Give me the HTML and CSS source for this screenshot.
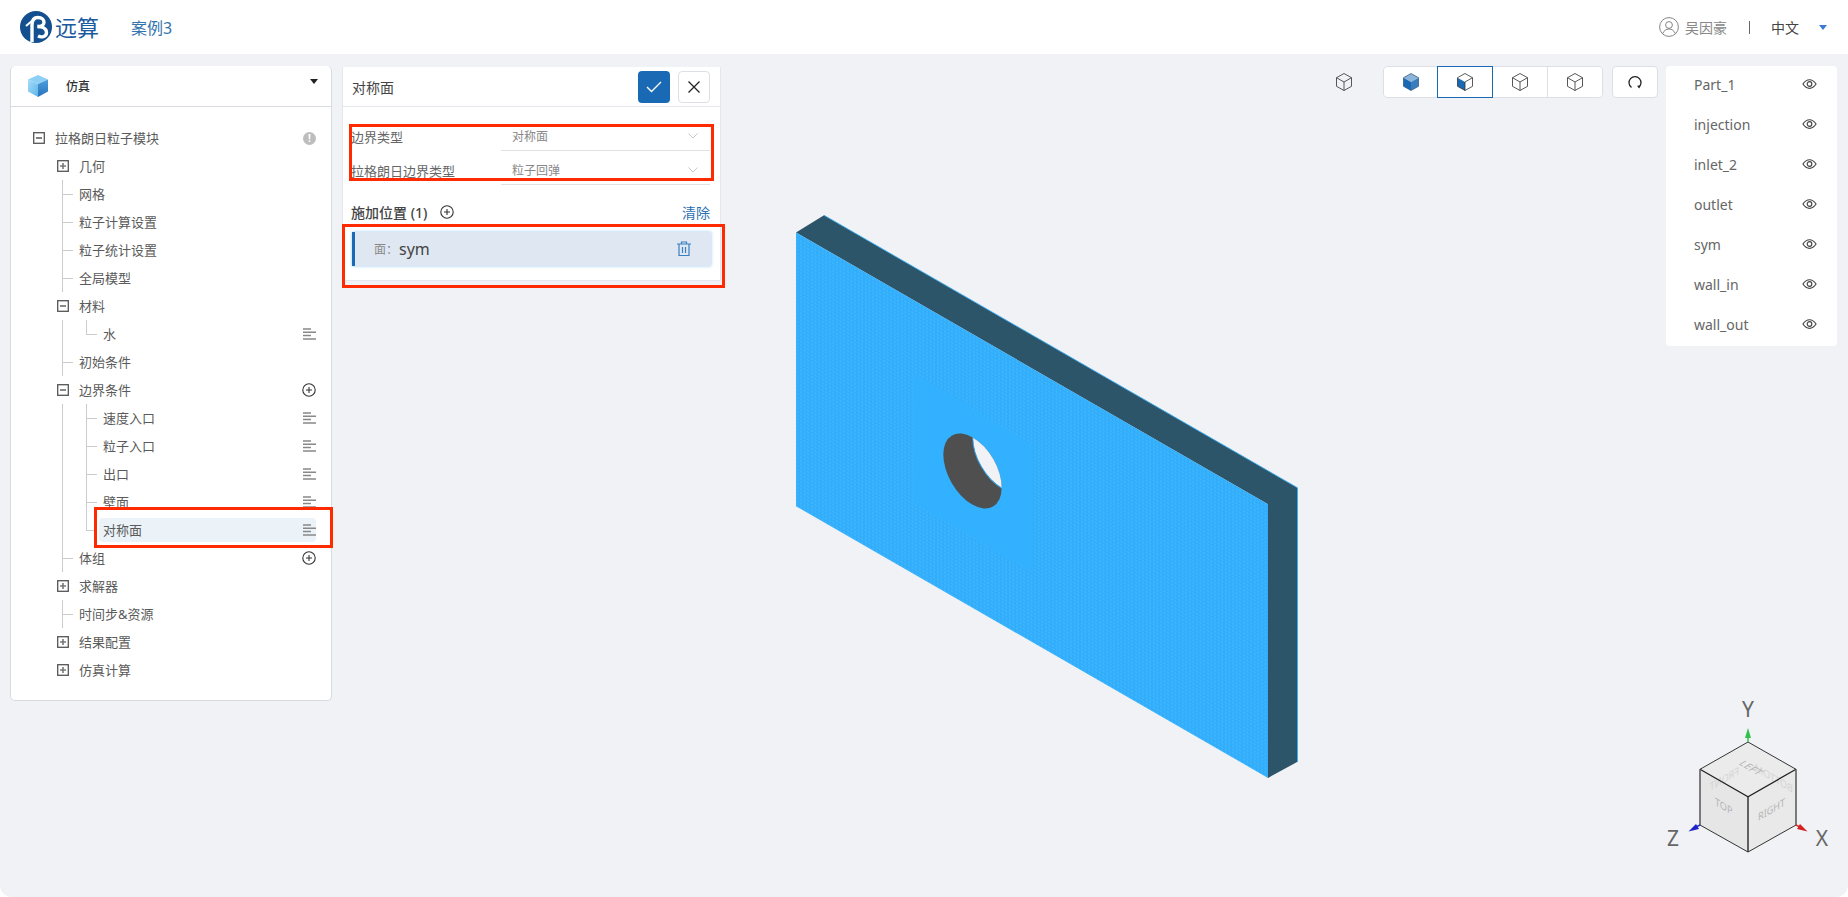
FILE: index.html
```html
<!DOCTYPE html>
<html lang="zh-CN">
<head>
    <meta charset="UTF-8">
    <meta name="viewport" content="width=device-width, initial-scale=1.0">
    <title>远算 - 案例3</title>
    <link rel="stylesheet" href="styles.css">
</head>
<body>
<svg class="sprites" width="0" height="0">
    <symbol id="i-minus" viewBox="0 0 12 12"><rect x=".7" y=".7" width="10.6" height="10.6" fill="#fff" stroke="#555" stroke-width="1.3"/><path d="M3 6h6" stroke="#555" stroke-width="1.4"/></symbol>
    <symbol id="i-plus" viewBox="0 0 12 12"><rect x=".7" y=".7" width="10.6" height="10.6" fill="#fff" stroke="#555" stroke-width="1.3"/><path d="M3 6h6M6 3v6" stroke="#777" stroke-width="1.6"/></symbol>
    <symbol id="i-lines" viewBox="0 0 13 12"><path d="M0 1h8M0 4.300h13M0 7.600h8M0 10.900h13" stroke="#888" stroke-width="1.500"/></symbol>
    <symbol id="i-add" viewBox="0 0 14 14"><circle cx="7" cy="7" r="6.200" fill="none" stroke="#333" stroke-width="1.100"/><path d="M4 7h6M7 4v6" stroke="#333" stroke-width="1.100"/></symbol>
    <symbol id="i-eye" viewBox="0 0 16 12"><path d="M1 6c2-3 4.300-4.600 7-4.600S13 3 15 6c-2 3-4.300 4.600-7 4.600S3 9 1 6z" fill="none" stroke="#444" stroke-width="1.200"/><circle cx="8" cy="6" r="2.500" fill="none" stroke="#444" stroke-width="1.200"/></symbol>
    <symbol id="i-chev" viewBox="0 0 10 6"><path d="M.5.500 5 5 9.500.500" fill="none" stroke="#c4c7cc" stroke-width="1"/></symbol>
    <symbol id="cube-plain" viewBox="0 0 16 18">
        <path d="M8 .5 15.500 4.700V13.300L8 17.500.5 13.300V4.700zM.5 4.700 8 9 15.500 4.700M8 9V17.500" fill="none" stroke="#444" stroke-width=".9"/>
    </symbol>
</svg>

<div class="app">
    <!-- 3D model and axis widget -->
    <svg class="model" viewBox="0 0 1848 897">
        <defs>
            <pattern id="mesh" width="3.600" height="3.600" patternUnits="userSpaceOnUse" patternTransform="skewY(30)">
                <rect width="3.600" height="3.600" fill="#32acfa"/>
                <rect x=".7" y=".7" width="2.200" height="2.200" fill="#3ab6ff"/>
            </pattern>
            <pattern id="mesh-fine" width="2.400" height="2.400" patternUnits="userSpaceOnUse" patternTransform="skewY(30)">
                <rect width="2.400" height="2.400" fill="#31b0ff"/>
                <rect x=".5" y=".5" width="1.400" height="1.400" fill="#34b3ff"/>
            </pattern>
            <clipPath id="hole-clip">
                <ellipse cx="972.500" cy="471" rx="41" ry="24" transform="rotate(60 972.500 471)"/>
            </clipPath>
        </defs>
        <path d="M796 232.500 824 215.300 1297.500 487.800V761.800L1268 777.900V504.200z" fill="#2d5569"/>
        <path d="M824 215.300 1297.500 487.800V761.800" fill="none" stroke="#38aef5" stroke-width=".9"/>
        <path d="M796 232.500 1268 504.200V777.900L796 506.200z" fill="url(#mesh)"/>
        <path d="M913 372.200 1032.500 444.900V573.100L913 502.300z" fill="url(#mesh-fine)"/>
        <ellipse cx="972.500" cy="471" rx="41" ry="24" transform="rotate(60 972.500 471)" fill="#4f4f4f"/>
        <g clip-path="url(#hole-clip)">
            <ellipse cx="1002" cy="454.600" rx="41" ry="24" transform="rotate(60 1002 454.600)" fill="#f0f2f6" stroke="#2f9fe0" stroke-width="1"/>
        </g>
    </svg>

    <svg class="axes" viewBox="0 0 218 217">
        <path d="M118 62 166 89.300 118 116.700 70 89.300z" fill="#ebebeb"/>
        <path d="M70 89.300 118 116.700V172L70 145z" fill="#e6e6e6"/>
        <path d="M118 116.700 166 89.300V145L118 172z" fill="#e9e9e9"/>
        <g class="axes-faint">
            <text transform="matrix(-.866 -.5 0 1 163 113)">BOTTOM</text>
            <text transform="matrix(-.866 .5 0 1 109 94)">FRONT</text>
        </g>
        <g class="axes-face">
            <text transform="matrix(.866 .5 0 1 85 125)">TOP</text>
            <text transform="matrix(.866 -.5 0 1 128 141)">RIGHT</text>
            <text transform="matrix(.866 .5 -.866 .5 108 84)">LEFT</text>
        </g>
        <path d="M118 62 166 89.300V145L118 172 70 145V89.300z" fill="none" stroke="#333" stroke-width="1"/>
        <path d="M70 89.300 118 116.700 166 89.300" fill="none" stroke="#222" stroke-width="1.300"/>
        <path d="M118 116.700V172" stroke="#333" stroke-width="1.500"/>
        <path d="M70 89.300V145M166 89.300V145" stroke="#666" stroke-width="1"/>
        <path d="M118 62V54" stroke="#35c24a" stroke-width="1.500"/>
        <path d="M118 48 121 58H115z" fill="#2fc24a"/>
        <path d="M70 145 64 148" stroke="#2233cc" stroke-width="1.500"/>
        <path d="M58.500 151.500 66 144 69 149z" fill="#1f22c8"/>
        <path d="M166 145 172 148" stroke="#d62b2b" stroke-width="1.500"/>
        <path d="M177.500 151.500 170 144 167 149z" fill="#d42020"/>
        <text class="axes-name" x="118" y="37">Y</text>
        <text class="axes-name" x="43" y="166">Z</text>
        <text class="axes-name" x="192" y="166">X</text>
    </svg>

    <header class="topbar">
        <div class="brand">
            <svg class="brand-mark" viewBox="0 0 32 32">
                <circle cx="16" cy="16" r="16" fill="#14508f"/>
                <path d="M6 15 12.500 9.500" fill="none" stroke="#fff" stroke-width="2"/>
                <path d="M12 31V14C12 9 14 6.500 18 6.500S24 9 24 11.500 21 15.500 17.500 15.500" fill="none" stroke="#fff" stroke-width="3.400"/>
                <path d="M17.500 15.500C22 15.500 26.500 17.500 26.500 21.500S22 27 18 25" fill="none" stroke="#fff" stroke-width="3.400"/>
            </svg>
            <span class="brand-name">远算</span>
        </div>
        <span class="case-name">案例3</span>
        <div class="topbar-right">
            <svg class="user-icon" viewBox="0 0 20 20">
                <circle cx="10" cy="10" r="9.400" fill="none" stroke="#777" stroke-width=".9"/>
                <circle cx="10" cy="8" r="3.400" fill="none" stroke="#777" stroke-width=".9"/>
                <path d="M3.800 16.500c1-3 3.400-4.500 6.200-4.500s5.200 1.500 6.200 4.500" fill="none" stroke="#777" stroke-width=".9"/>
            </svg>
            <span class="user-name">吴因豪</span>
            <span class="divider"></span>
            <span class="lang">中文</span>
            <span class="lang-caret"></span>
        </div>
    </header>

    <main class="workspace">
        <!-- Simulation tree -->
        <aside class="tree-panel">
            <div class="tree-head">
                <svg class="head-cube" viewBox="0 0 20 22">
                    <defs>
                        <linearGradient id="cube-left" x1="0" y1="0" x2="1" y2="1"><stop offset="0" stop-color="#a5dcf8"/><stop offset="1" stop-color="#5db4ea"/></linearGradient>
                        <linearGradient id="cube-right" x1="0" y1="0" x2="0" y2="1"><stop offset="0" stop-color="#4a9fdc"/><stop offset="1" stop-color="#2a72bd"/></linearGradient>
                    </defs>
                    <path d="M10 0 20 4.500 10 9 0 4.500z" fill="#8ed0f5"/>
                    <path d="M0 4.500 10 9V22L0 16.500z" fill="url(#cube-left)"/>
                    <path d="M20 4.500 10 9V22L20 16.500z" fill="url(#cube-right)"/>
                </svg>
                <span class="head-title">仿真</span>
                <span class="head-caret"></span>
            </div>
            <div class="tree">
                <div class="row">
                    <svg class="toggle"><use href="#i-minus"/></svg>
                    <span>拉格朗日粒子模块</span>
                    <span class="alert">!</span>
                </div>
                <div class="tree-body">
                    <div class="row"><svg class="toggle"><use href="#i-plus"/></svg><span>几何</span></div>
                    <div class="branch">
                        <div class="leaf"><span>网格</span></div>
                        <div class="leaf"><span>粒子计算设置</span></div>
                        <div class="leaf"><span>粒子统计设置</span></div>
                        <div class="leaf"><span>全局模型</span></div>
                    </div>
                    <div class="row"><svg class="toggle"><use href="#i-minus"/></svg><span>材料</span></div>
                    <div class="branch">
                        <div class="sub">
                            <div class="leaf"><span>水</span><svg class="action"><use href="#i-lines"/></svg></div>
                        </div>
                        <div class="leaf"><span>初始条件</span></div>
                    </div>
                    <div class="row"><svg class="toggle"><use href="#i-minus"/></svg><span>边界条件</span><svg class="action add"><use href="#i-add"/></svg></div>
                    <div class="branch">
                        <div class="sub">
                            <div class="leaf"><span>速度入口</span><svg class="action"><use href="#i-lines"/></svg></div>
                            <div class="leaf"><span>粒子入口</span><svg class="action"><use href="#i-lines"/></svg></div>
                            <div class="leaf"><span>出口</span><svg class="action"><use href="#i-lines"/></svg></div>
                            <div class="leaf"><span>壁面</span><svg class="action"><use href="#i-lines"/></svg></div>
                            <div class="leaf active"><span>对称面</span><svg class="action"><use href="#i-lines"/></svg></div>
                        </div>
                        <div class="leaf"><span>体组</span><svg class="action add"><use href="#i-add"/></svg></div>
                    </div>
                    <div class="row"><svg class="toggle"><use href="#i-plus"/></svg><span>求解器</span></div>
                    <div class="branch">
                        <div class="leaf"><span>时间步&amp;资源</span></div>
                    </div>
                    <div class="row"><svg class="toggle"><use href="#i-plus"/></svg><span>结果配置</span></div>
                    <div class="row"><svg class="toggle"><use href="#i-plus"/></svg><span>仿真计算</span></div>
                </div>
            </div>
        </aside>

        <!-- Boundary condition form -->
        <section class="form-panel">
            <div class="form-head">
                <span class="form-title">对称面</span>
                <button class="btn-ok">
                    <svg viewBox="0 0 16 12" width="16" height="12"><path d="M1 6l4.500 4.500L15 1" fill="none" stroke="#fff" stroke-width="1.400"/></svg>
                </button>
                <button class="btn-close">
                    <svg viewBox="0 0 12 12" width="12" height="12"><path d="M.5.500l11 11M11.500.500l-11 11" stroke="#222" stroke-width="1.300"/></svg>
                </button>
            </div>
            <div class="form-body">
                <div class="field">
                    <label>边界类型</label>
                    <div class="select"><span>对称面</span><svg class="chev"><use href="#i-chev"/></svg></div>
                </div>
                <div class="field">
                    <label>拉格朗日边界类型</label>
                    <div class="select"><span>粒子回弹</span><svg class="chev"><use href="#i-chev"/></svg></div>
                </div>
                <div class="apply-head">
                    <b>施加位置 (1)</b>
                    <svg class="apply-add"><use href="#i-add"/></svg>
                    <a class="clear">清除</a>
                </div>
                <div class="apply-item">
                    <span class="apply-kind">面：</span>
                    <span class="apply-name">sym</span>
                    <svg class="trash" viewBox="0 0 14 16">
                        <path d="M0 3h14M4.500 3V1h5v2M2 3v11.500h10V3M5.500 6v6M8.500 6v6" fill="none" stroke="#3a7fc0" stroke-width="1.200"/>
                    </svg>
                </div>
            </div>
        </section>

        <!-- Viewer toolbar and part list -->
        <div class="viewer">
            <div class="view-home">
                <svg class="cube"><use href="#cube-plain"/></svg>
            </div>
            <div class="view-group">
                <button class="view-btn"><svg class="cube" viewBox="0 0 16 18"><path d="M8 .5 15.500 4.700 8 9 .5 4.700z" fill="#8db4d9"/><path d="M.5 4.700 8 9V17.500L.5 13.300z" fill="#1a69b5"/><path d="M15.500 4.700 8 9V17.500L15.500 13.300z" fill="#3a7dbd"/><path d="M8 .5 15.500 4.700V13.300L8 17.500.5 13.300V4.700z" fill="none" stroke="#24527f" stroke-width=".7"/></svg></button>
                <button class="view-btn active"><svg class="cube" viewBox="0 0 16 18"><path d="M.5 4.700 8 9V17.500L.5 13.300z" fill="#1a69b5"/><path d="M8 .5 15.500 4.700V13.300L8 17.500.5 13.300V4.700L8 .5M8 9 15.500 4.700M8 9V17.500" fill="none" stroke="#333" stroke-width=".8"/></svg></button>
                <button class="view-btn"><svg class="cube"><use href="#cube-plain"/></svg></button>
                <button class="view-btn"><svg class="cube"><use href="#cube-plain"/></svg></button>
            </div>
            <button class="view-reset">
                <svg viewBox="0 0 14 14" width="14" height="14"><path d="M3.500 12.500A6 6 0 1 1 10.500 12.500" fill="none" stroke="#222" stroke-width="1.300"/><path d="M9 10.800 12 10.500 11.400 13.400z" fill="#222"/></svg>
            </button>
            <ul class="parts">
                <li><span>Part_1</span><svg class="eye"><use href="#i-eye"/></svg></li>
                <li><span>injection</span><svg class="eye"><use href="#i-eye"/></svg></li>
                <li><span>inlet_2</span><svg class="eye"><use href="#i-eye"/></svg></li>
                <li><span>outlet</span><svg class="eye"><use href="#i-eye"/></svg></li>
                <li><span>sym</span><svg class="eye"><use href="#i-eye"/></svg></li>
                <li><span>wall_in</span><svg class="eye"><use href="#i-eye"/></svg></li>
                <li><span>wall_out</span><svg class="eye"><use href="#i-eye"/></svg></li>
            </ul>
        </div>
    </main>

    <!-- Annotation boxes over the page -->
    <div class="mark mark-tree"></div>
    <div class="mark mark-form"></div>
    <div class="mark mark-apply"></div>
</div>
</body>
</html>
```

FILE: styles.css
```css
/* General */
* {
    box-sizing: border-box;
}
html, body {
    margin: 0;
    height: 100%;
    background: #fff;
    overflow: hidden;
}
body {
    font-family: "Noto Sans", "Noto Sans CJK SC", sans-serif;
    font-size: 13px;
    color: #5a5a5a;
}
.sprites {
    position: absolute;
}
.app {
    position: relative;
    height: 897px;
    background: #f0f2f6;
    border-radius: 12px;
    overflow: hidden;
}

/* Model canvas */
.model {
    position: absolute;
    left: 0;
    top: 0;
    width: 1848px;
    height: 897px;
}
.axes {
    position: absolute;
    right: 0;
    bottom: 0;
    width: 218px;
    height: 217px;
}
.axes text {
    font-family: "Noto Sans", sans-serif;
}
.axes-face {
    font-size: 10.500px;
    fill: #b5b5b5;
}
.axes-faint {
    font-size: 10.500px;
    fill: #d4d4d4;
}
.axes-name {
    font-size: 21px;
    fill: #666;
    text-anchor: middle;
}

/* Top bar */
.topbar {
    position: relative;
    display: flex;
    align-items: center;
    height: 54px;
    padding: 0 21px 0 20px;
    background: #fff;
}
.brand {
    position: relative;
    display: flex;
    align-items: center;
    gap: 3px;
}
.brand-mark {
    width: 32px;
    height: 32px;
}
.brand-name {
    font-size: 22px;
    line-height: 1;
    color: #1a5a9e;
}
.case-name {
    margin-left: 32px;
    font-size: 16px;
    color: #3474ad;
}
.topbar-right {
    display: flex;
    align-items: center;
    margin-left: auto;
}
.user-icon {
    width: 20px;
    height: 20px;
}
.user-name {
    margin-left: 6px;
    font-size: 14px;
    color: #888;
}
.divider {
    width: 1px;
    height: 13px;
    margin: 0 21px 0 22px;
    background: #666;
}
.lang {
    font-size: 14px;
    color: #444;
}
.lang-caret {
    width: 0;
    height: 0;
    margin-left: 20px;
    border: 4px solid transparent;
    border-top: 5px solid #3a7bd5;
    border-bottom: 0;
}

/* Work area */
.workspace {
    position: relative;
    display: flex;
    align-items: flex-start;
    padding: 12px 11px 0 10px;
}

/* Tree panel */
.tree-panel {
    flex: 0 0 322px;
    height: 635px;
    background: #fff;
    border: 1px solid #d8dbe2;
    border-top: 0;
    border-radius: 5px;
}
.tree-head {
    position: relative;
    display: flex;
    align-items: center;
    height: 41px;
    padding-left: 17px;
    border-bottom: 1px solid #d8dbe2;
}
.head-cube {
    width: 20px;
    height: 22px;
}
.head-title {
    margin-left: 18px;
    font-size: 12px;
    font-weight: 500;
    color: #333;
}
.head-caret {
    position: absolute;
    right: 13px;
    top: 13px;
    border: 4px solid transparent;
    border-top: 5px solid #222;
    border-bottom: 0;
}
.tree {
    padding: 17px 15px 0 22px;
}
.tree-body {
    margin-left: 24px;
}
.row, .leaf {
    position: relative;
    display: flex;
    align-items: center;
    height: 28px;
}
.row > span:first-of-type, .leaf > span {
    margin-top: -2px;
}
.toggle {
    flex: none;
    width: 12px;
    height: 12px;
    margin-right: 10px;
}
.alert {
    width: 13px;
    height: 13px;
    margin-left: auto;
    border-radius: 50%;
    background: #bdbdbd;
    color: #fff;
    font-size: 10px;
    font-weight: 700;
    line-height: 13px;
    text-align: center;
}
.action {
    flex: none;
    width: 13px;
    height: 12px;
    margin-left: auto;
}
.action.add {
    width: 14px;
    height: 14px;
}

/* Tree connectors */
.branch {
    position: relative;
    margin-left: 5px;
}
.branch::before, .sub::before {
    content: "";
    position: absolute;
    left: 0;
    top: 0;
    width: 1px;
    background: #ccc;
}
.branch::before {
    bottom: 0;
}
.sub {
    position: relative;
    margin-left: 24px;
}
.sub::before {
    bottom: 14px;
}
.leaf {
    padding-left: 17px;
}
.leaf::before {
    content: "";
    position: absolute;
    left: 0;
    top: 14px;
    width: 11px;
    height: 1px;
    background: #ccc;
}
.leaf.active::after {
    content: "";
    position: absolute;
    left: 13px;
    right: 0;
    top: 2px;
    bottom: 2px;
    border-radius: 4px;
    background: #ebf3f9;
}
.leaf.active span, .leaf.active svg {
    position: relative;
    z-index: 1;
}

/* Form panel */
.form-panel {
    flex: 0 0 379px;
    height: 214px;
    margin: 1px 0 0 10px;
    background: #fff;
    border: 1px solid #e4e7ed;
    border-top: 0;
}
.form-head {
    display: flex;
    align-items: center;
    gap: 8px;
    height: 40px;
    padding: 0 10px 0 9px;
    border-bottom: 1px solid #e4e7ed;
}
.form-title {
    margin-right: auto;
    font-size: 14px;
    color: #444;
}
.btn-ok, .btn-close {
    display: flex;
    align-items: center;
    justify-content: center;
    width: 32px;
    height: 32px;
    padding: 0;
    border-radius: 4px;
}
.btn-ok {
    border: 0;
    background: #1a69b5;
}
.btn-close {
    border: 1px solid #dcdfe6;
    background: #fff;
}
.form-body {
    padding: 10px 10px 0 8px;
}
.field {
    display: flex;
    align-items: center;
    height: 34px;
}
.field label {
    flex: 0 0 150px;
    margin-top: 4px;
    color: #666;
}
.select {
    display: flex;
    align-items: center;
    justify-content: space-between;
    align-self: stretch;
    flex: 1;
    padding: 4px 12px 0 11px;
    border-bottom: 1px solid #e0e2e6;
    font-size: 12px;
    color: #888;
}
.chev {
    width: 10px;
    height: 6px;
}
.apply-head {
    display: flex;
    align-items: center;
    height: 24px;
    margin-top: 15px;
    font-size: 14px;
}
.apply-head b {
    font-weight: 500;
    color: #444;
}
.apply-add {
    width: 14px;
    height: 14px;
    margin-left: 13px;
}
.clear {
    margin-left: auto;
    font-size: 14px;
    color: #2a6fb0;
}
.apply-item {
    display: flex;
    align-items: center;
    height: 34px;
    margin: 8px -1px 0 1px;
    padding: 0 20px 0 19px;
    background: #dfe8f2;
    border-left: 3px solid #1a69b5;
    box-shadow: 0 0 3px rgba(80, 165, 235, 0.6);
}
.apply-kind {
    font-size: 12px;
    color: #888;
}
.apply-name {
    margin-left: 1px;
    font-size: 16px;
    color: #444;
}
.trash {
    width: 14px;
    height: 16px;
    margin-left: auto;
}

/* Viewer toolbar */
.viewer {
    flex: 1;
    display: flex;
    align-items: flex-start;
    justify-content: flex-end;
}
.view-home {
    display: flex;
    align-items: center;
    height: 32px;
    margin-right: 31px;
}
.cube {
    width: 16px;
    height: 18px;
}
.view-group {
    display: grid;
    grid-template-columns: repeat(4, 55px);
    height: 32px;
    background: #fff;
    border-radius: 4px;
}
.view-btn {
    display: flex;
    align-items: center;
    justify-content: center;
    padding: 0;
    margin-left: -1px;
    background: #fff;
    border: 1px solid #dcdfe6;
}
.view-btn:first-child {
    margin-left: 0;
    border-radius: 4px 0 0 4px;
}
.view-btn:last-child {
    border-radius: 0 4px 4px 0;
}
.view-btn.active {
    position: relative;
    border-color: #1a69b5;
}
.view-reset {
    display: flex;
    align-items: center;
    justify-content: center;
    width: 46px;
    height: 32px;
    margin-left: 9px;
    padding: 0;
    background: #fff;
    border: 1px solid #dcdfe6;
    border-radius: 4px;
}

/* Part list */
.parts {
    flex: 0 0 171px;
    margin: 0 0 0 8px;
    padding: 0;
    list-style: none;
    background: #fff;
    border-radius: 4px;
}
.parts li {
    display: flex;
    align-items: center;
    justify-content: space-between;
    height: 40px;
    padding: 0 20px 4px 28px;
    font-size: 14px;
    color: #666;
}
.eye {
    width: 15px;
    height: 12px;
}

/* Annotation boxes */
.mark {
    position: absolute;
    border: 3px solid #ff2a00;
}
.mark-tree {
    left: 94px;
    top: 507px;
    width: 239px;
    height: 41px;
}
.mark-form {
    left: 349px;
    top: 124px;
    width: 365px;
    height: 57px;
}
.mark-apply {
    left: 342px;
    top: 224px;
    width: 383px;
    height: 64px;
}
```
